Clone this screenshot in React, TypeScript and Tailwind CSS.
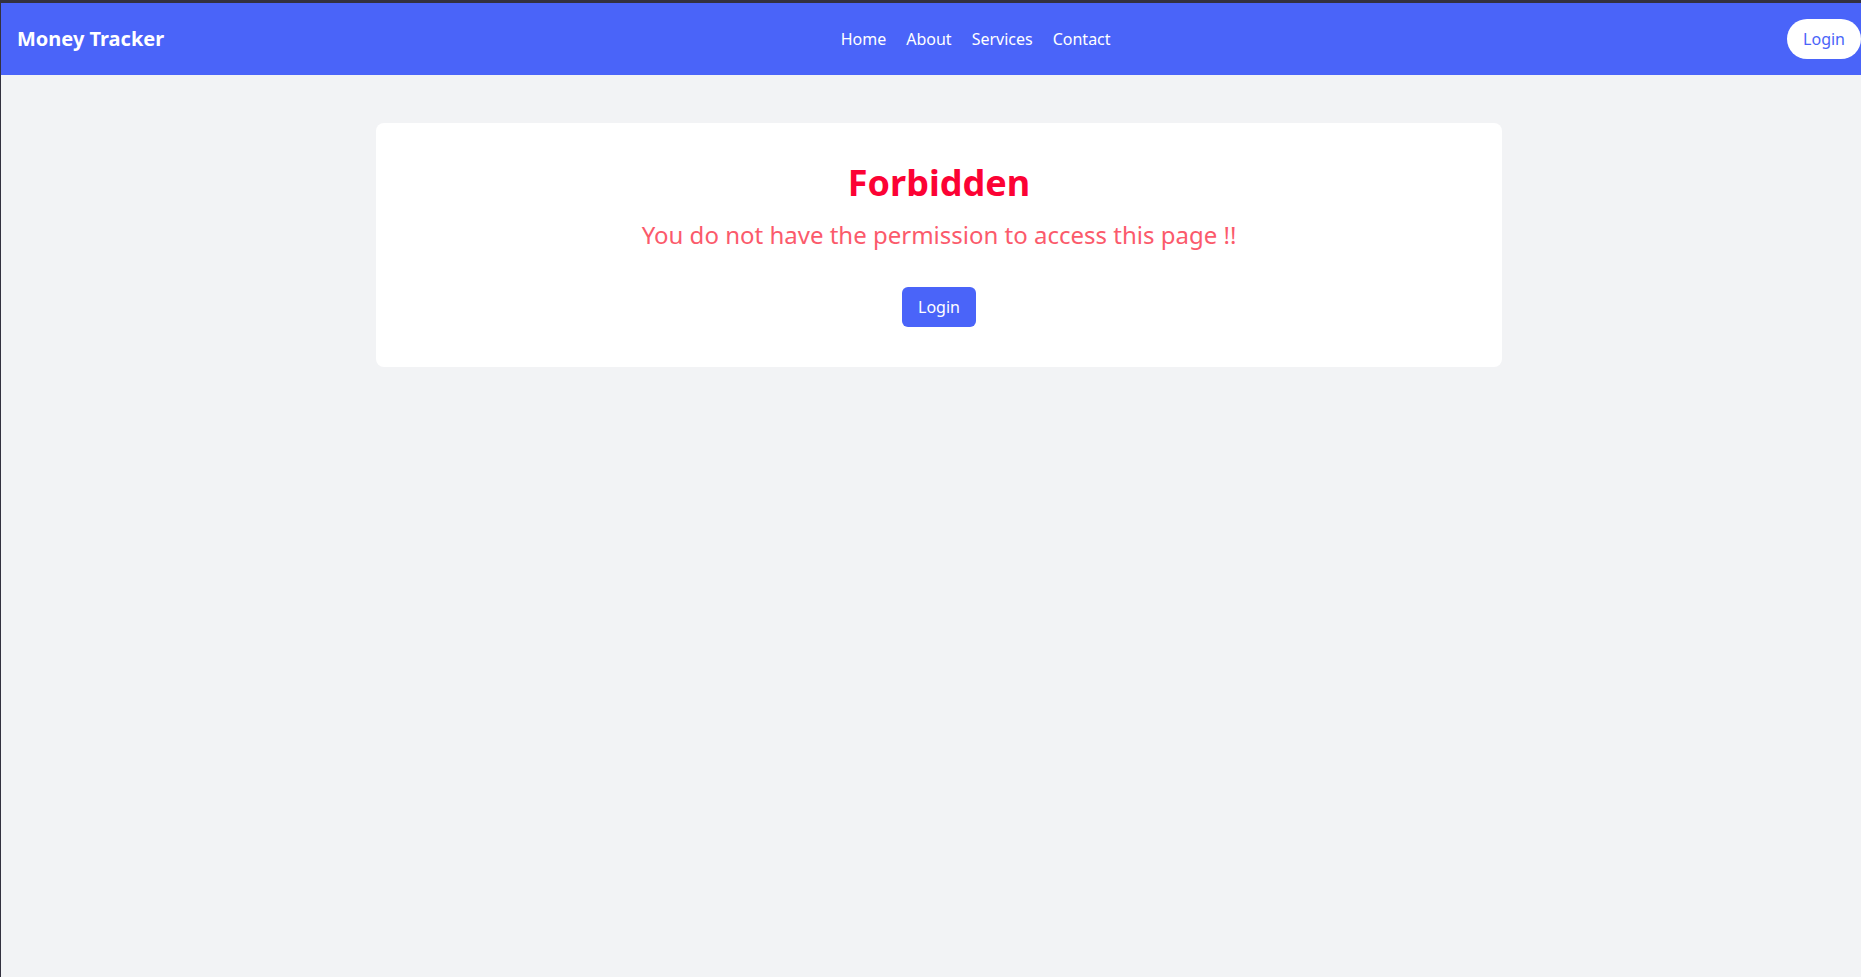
export default function App() {
  return (
    <div
      className="w-full h-screen overflow-hidden border-t-[3px] border-l border-[#33313f] bg-[#f2f3f5]"
      style={{ fontFamily: '"Noto Sans", "Open Sans", sans-serif' }}
    >
      <div className="w-[1876px] min-h-full bg-[#f2f3f5]">
        <nav className="flex items-center justify-between bg-[#4a64f9] px-4 py-4">
          <div className="text-xl font-bold text-white">Money Tracker</div>
          <ul className="flex items-center gap-5 text-base text-white">
            <li>Home</li>
            <li>About</li>
            <li>Services</li>
            <li>Contact</li>
          </ul>
          <button className="rounded-full bg-white px-4 py-2 text-base leading-6 text-[#4a64f9]">
            Login
          </button>
        </nav>
        <main className="flex justify-center">
          <div className="mt-12 w-3/5 rounded-lg bg-white p-10 text-center">
            <h1 className="text-4xl font-bold text-[#fc0234]">Forbidden</h1>
            <p className="mt-4 text-2xl text-[#fb5a6b]">
              You do not have the permission to access this page !!
            </p>
            <button className="mt-9 rounded-md bg-[#4a64f9] px-4 py-2 text-base leading-6 text-white">
              Login
            </button>
          </div>
        </main>
      </div>
    </div>
  );
}
